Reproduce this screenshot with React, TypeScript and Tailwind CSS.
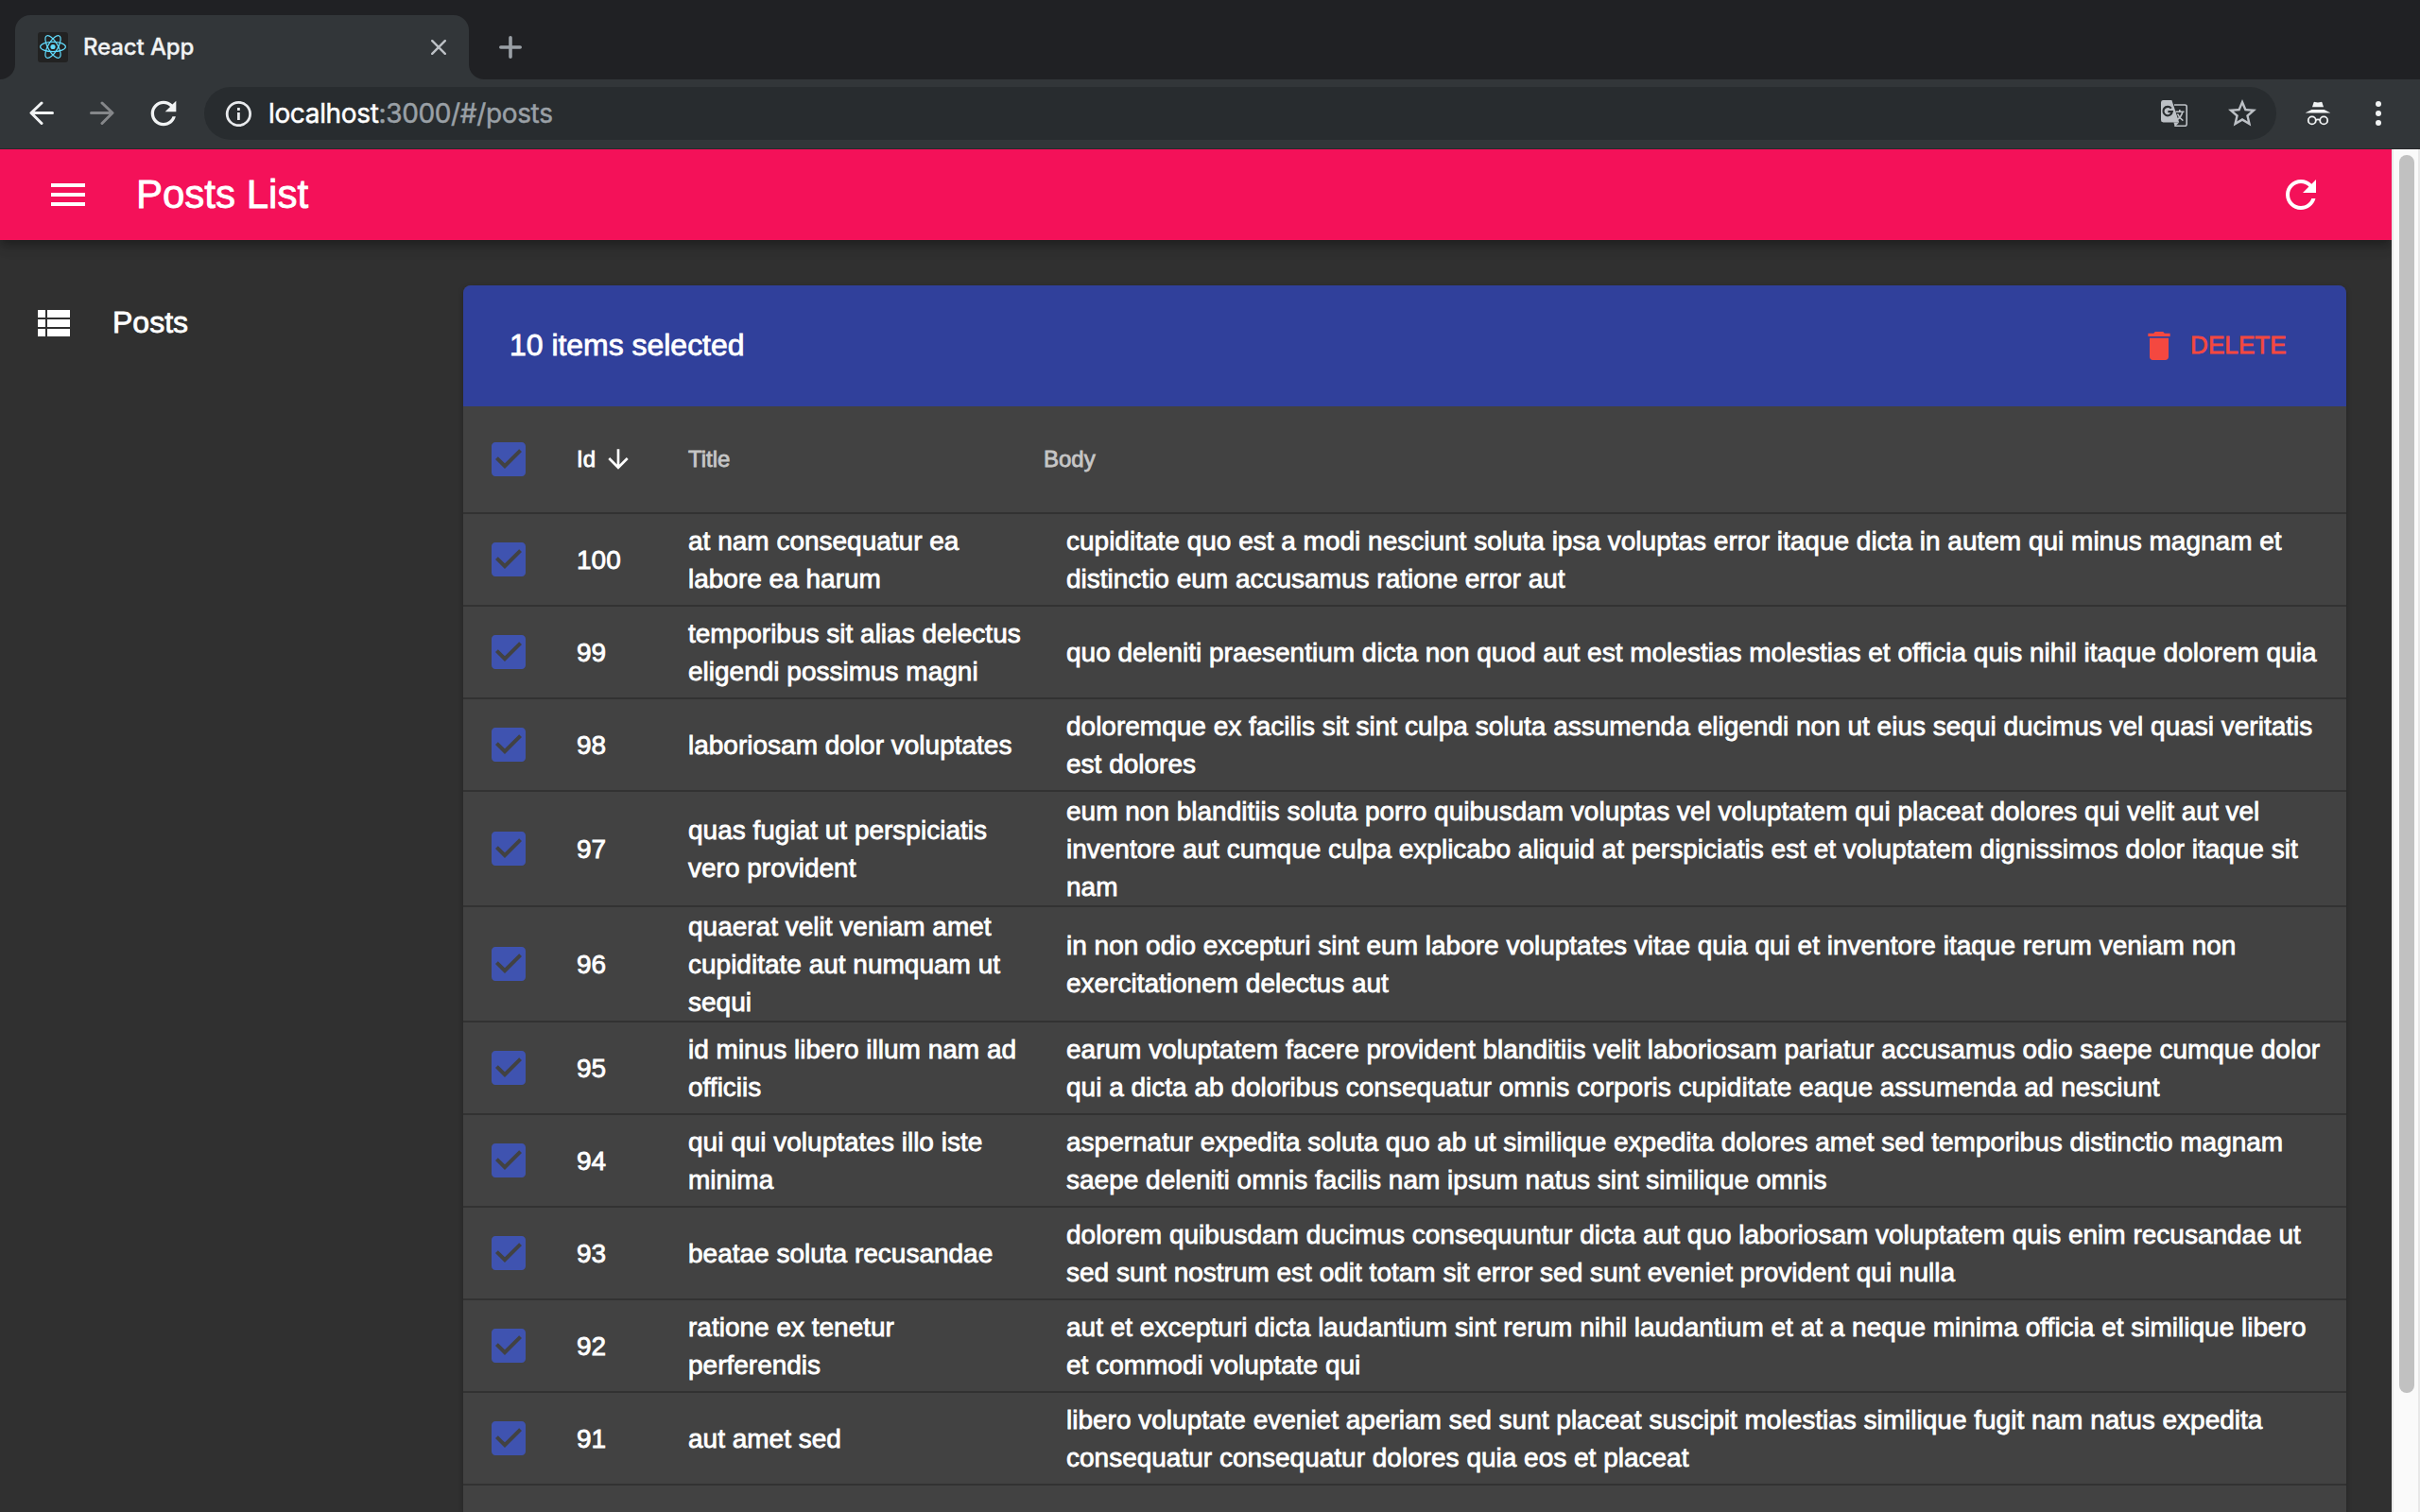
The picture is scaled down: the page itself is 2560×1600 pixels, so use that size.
import React from "react";

const rows: { id: number; title: string[]; body: string[] }[] = [
  { id: 100, title: ["at nam consequatur ea", "labore ea harum"], body: ["cupiditate quo est a modi nesciunt soluta ipsa voluptas error itaque dicta in autem qui minus magnam et", "distinctio eum accusamus ratione error aut"] },
  { id: 99, title: ["temporibus sit alias delectus", "eligendi possimus magni"], body: ["quo deleniti praesentium dicta non quod aut est molestias molestias et officia quis nihil itaque dolorem quia"] },
  { id: 98, title: ["laboriosam dolor voluptates"], body: ["doloremque ex facilis sit sint culpa soluta assumenda eligendi non ut eius sequi ducimus vel quasi veritatis", "est dolores"] },
  { id: 97, title: ["quas fugiat ut perspiciatis", "vero provident"], body: ["eum non blanditiis soluta porro quibusdam voluptas vel voluptatem qui placeat dolores qui velit aut vel", "inventore aut cumque culpa explicabo aliquid at perspiciatis est et voluptatem dignissimos dolor itaque sit", "nam"] },
  { id: 96, title: ["quaerat velit veniam amet", "cupiditate aut numquam ut", "sequi"], body: ["in non odio excepturi sint eum labore voluptates vitae quia qui et inventore itaque rerum veniam non", "exercitationem delectus aut"] },
  { id: 95, title: ["id minus libero illum nam ad", "officiis"], body: ["earum voluptatem facere provident blanditiis velit laboriosam pariatur accusamus odio saepe cumque dolor", "qui a dicta ab doloribus consequatur omnis corporis cupiditate eaque assumenda ad nesciunt"] },
  { id: 94, title: ["qui qui voluptates illo iste", "minima"], body: ["aspernatur expedita soluta quo ab ut similique expedita dolores amet sed temporibus distinctio magnam", "saepe deleniti omnis facilis nam ipsum natus sint similique omnis"] },
  { id: 93, title: ["beatae soluta recusandae"], body: ["dolorem quibusdam ducimus consequuntur dicta aut quo laboriosam voluptatem quis enim recusandae ut", "sed sunt nostrum est odit totam sit error sed sunt eveniet provident qui nulla"] },
  { id: 92, title: ["ratione ex tenetur", "perferendis"], body: ["aut et excepturi dicta laudantium sint rerum nihil laudantium et at a neque minima officia et similique libero", "et commodi voluptate qui"] },
  { id: 91, title: ["aut amet sed"], body: ["libero voluptate eveniet aperiam sed sunt placeat suscipit molestias similique fugit nam natus expedita", "consequatur consequatur dolores quia eos et placeat"] },
];

function Icon({ d, className }: { d: string; className: string }) {
  return (
    <svg viewBox="0 0 24 24" fill="currentColor" className={`shrink-0 ${className}`}>
      <path d={d} />
    </svg>
  );
}

const REFRESH = "M17.65 6.35C16.2 4.9 14.21 4 12 4c-4.42 0-7.99 3.58-7.99 8s3.57 8 7.99 8c3.73 0 6.84-2.55 7.73-6h-2.08c-.82 2.33-3.04 4-5.65 4-3.31 0-6-2.69-6-6s2.69-6 6-6c1.66 0 3.14.69 4.22 1.78L13 11h7V4l-2.35 2.35z";
const CHECKED = "M19 3H5c-1.11 0-2 .9-2 2v14c0 1.1.89 2 2 2h14c1.11 0 2-.9 2-2V5c0-1.1-.89-2-2-2zm-9 14l-5-5 1.41-1.41L10 14.17l7.59-7.59L19 8l-9 9z";

function Favicon() {
  return (
    <svg viewBox="0 0 32 32" className="size-8 shrink-0" fill="none" stroke="#61dafb" strokeWidth="1.2">
      <rect width="32" height="32" rx="3" fill="#222" stroke="none" />
      <circle cx="16" cy="15.5" r="2.6" fill="#61dafb" stroke="none" />
      <ellipse cx="16" cy="15.5" rx="13.4" ry="5.2" />
      <ellipse cx="16" cy="15.5" rx="13.4" ry="5.2" transform="rotate(60 16 15.5)" />
      <ellipse cx="16" cy="15.5" rx="13.4" ry="5.2" transform="rotate(120 16 15.5)" />
    </svg>
  );
}

function TabStrip() {
  return (
    <div className="flex h-[84px] items-end bg-[#202124]">
      <svg viewBox="0 0 16 16" className="size-4 shrink-0 text-[#323639]" fill="currentColor"><path d="M16 0V16H0A16 16 0 0 0 16 0Z" /></svg>
      <div className="flex h-[68px] w-[480px] items-center rounded-t-2xl bg-[#323639] pl-6 pr-6">
        <Favicon />
        <span className="ml-4 flex-1 whitespace-nowrap font-[Inter] text-[24px] leading-8 font-medium tracking-[-0.12px] text-[#f1f3f4] [-webkit-text-stroke:0.3px]">React App</span>
        <svg viewBox="0 0 16 16" className="size-4" stroke="#bdc1c6" strokeWidth="2.4" strokeLinecap="round"><path d="M1.2 1.2L14.8 14.8M14.8 1.2L1.2 14.8" /></svg>
      </div>
      <svg viewBox="0 0 16 16" className="size-4 shrink-0 text-[#323639]" fill="currentColor"><path d="M0 0V16H16A16 16 0 0 1 0 0Z" /></svg>
      <div className="flex h-[68px] items-center pl-4">
        <svg viewBox="0 0 24 24" className="size-6" stroke="#9aa0a6" strokeWidth="3.6" strokeLinecap="round"><path d="M12 1.8V22.2M1.8 12H22.2" /></svg>
      </div>
    </div>
  );
}

function Toolbar() {
  return (
    <div className="flex h-[74px] items-center bg-[#323639] shadow-[inset_0_-1px_0_#28292c] pb-[2px]">
      <svg viewBox="0 0 26 26" className="ml-[31px] size-[26px]" fill="none" stroke="#f1f3f4" strokeWidth="3" strokeLinecap="round" strokeLinejoin="round"><path d="M13 2L2 12.5L13 23.5M2.4 12.5H24.5" /></svg>
      <svg viewBox="0 0 26 26" className="ml-[38px] size-[26px]" fill="none" stroke="#85878a" strokeWidth="3" strokeLinecap="round" strokeLinejoin="round"><path d="M13 2L24 12.5L13 23.5M23.6 12.5H1.5" /></svg>
      <Icon d={REFRESH} className="ml-[32px] size-[40px] text-[#f1f3f4]" />
      <div className="ml-[23px] flex h-14 w-[2192px] items-center rounded-full bg-[#282c2f]">
        <svg viewBox="0 0 28 28" className="ml-[22px] size-7" fill="none" stroke="#e8eaed" strokeWidth="2.8"><circle cx="14.4" cy="14.5" r="12.2" /><path d="M14.4 12.9V21M14.4 7.9V10.9" /></svg>
        <span className="ml-[18px] flex-1 whitespace-nowrap font-[Inter] text-[28px] leading-8 tracking-[-0.35px] text-[#9aa0a6] [-webkit-text-stroke:0.5px]"><span className="text-[#fff]">localhost</span>:3000/#/posts</span>
        <svg viewBox="0 0 28 28" className="size-7" fill="none">
          <path d="M14 5H25.2A2 2 0 0 1 27.2 7V25.2A2 2 0 0 1 25.2 27.2H14.4" stroke="#bdc1c6" strokeWidth="1.6" />
          <path d="M2.4 0H11.4L19.2 23.5H2.4A2.4 2.4 0 0 1 0 21.1V2.4A2.4 2.4 0 0 1 2.4 0Z" fill="#bdc1c6" />
          <path d="M13.4 23.5H19.2L14.8 28Z" fill="#bdc1c6" />
          <path d="M10.8 8.6A4.7 4.7 0 1 0 11.8 12.2H7.4" stroke="#282c2f" strokeWidth="2.2" />
          <path d="M15.5 12.2H24.5M19.8 10V12M22.8 12.5C22 16 19.5 19 17.2 20.6M17.5 14.5C18.6 17.3 20.5 19.8 23.4 21.6" stroke="#bdc1c6" strokeWidth="1.6" />
        </svg>
        <Icon d="M22 9.24l-7.19-.62L12 2 9.19 8.63 2 9.24l5.46 4.73L5.82 21 12 17.27 18.18 21l-1.63-7.03L22 9.24zM12 15.4l-3.76 2.27 1-4.28-3.32-2.88 4.38-.38L12 6.1l1.71 4.04 4.38.38-3.32 2.88 1 4.28L12 15.4z" className="ml-10 mr-[18px] size-9 text-[#bdc1c6]" />
      </div>
      <svg viewBox="0 0 26 26" className="ml-[31px] size-[26px]" fill="#f1f3f4">
        <path d="M8.6 1.2Q9 0.6 9.8 0.9L13 1.6L16.2 0.9Q17 0.6 17.4 1.2L19 6.2H7Z" />
        <path d="M6.4 9H19.6L26.4 12.4H-0.4Z" />
        <g fill="none" stroke="#f1f3f4" strokeWidth="1.8"><circle cx="6.8" cy="20.4" r="4" /><circle cx="19.2" cy="20.4" r="4" /><path d="M10.8 20Q13 18.8 15.2 20" /></g>
      </svg>
      <svg viewBox="0 0 6 26" className="ml-12 h-[26px] w-[6px]" fill="#f1f3f4"><circle cx="3" cy="3" r="3" /><circle cx="3" cy="13" r="3" /><circle cx="3" cy="23" r="3" /></svg>
    </div>
  );
}

function PostsTable() {
  return (
    <div className="min-w-0 flex-1 rounded-t-lg bg-[#424242] shadow-[0_2px_6px_rgba(0,0,0,0.2),0_2px_2px_rgba(0,0,0,0.14)]">
      <div className="flex h-32 items-center rounded-t-lg bg-[#30409b] pl-[49px] pr-[62px] text-[#fff]">
        <span className="flex-1 pb-[2px] text-[32px] leading-none tracking-[-0.03px]">10 items selected</span>
        <Icon d="M6 19c0 1.1.9 2 2 2h8c1.1 0 2-.9 2-2V7H6v12zM19 4h-3.5l-1-1h-5l-1 1H5v2h14V4z" className="size-10 text-[#f44840]" />
        <span className="ml-[13px] w-[103px] whitespace-nowrap pb-[2px] text-[26px] leading-none tracking-[0.1px] text-[#f44840]">DELETE</span>
      </div>
      <div className="flex h-[114px] items-center border-b-2 border-[#323232] pl-6 text-[24px] text-[#c6c6c6]">
        <Icon d={CHECKED} className="size-12 text-[#3f53b0]" />
        <span className="ml-12 flex w-[118px] items-center text-white">Id<Icon d="M20 12l-1.41-1.41L13 16.17V4h-2v12.17l-5.58-5.59L4 12l8 8 8-8z" className="ml-2 size-8" /></span>
        <span className="w-[376px]">Title</span>
        <span>Body</span>
      </div>
      {rows.map((r) => (
        <div key={r.id} className="flex min-h-[98px] items-center border-b-2 border-[#323232] pl-6 text-[28px] leading-[40px] whitespace-nowrap text-white">
          <Icon d={CHECKED} className="size-12 text-[#3f53b0]" />
          <span className="ml-12 w-[118px] translate-y-px">{r.id}</span>
          <div className="w-[400px] translate-y-px">{r.title.map((l) => <div key={l}>{l}</div>)}</div>
          <div className="translate-y-px">{r.body.map((l) => <div key={l}>{l}</div>)}</div>
        </div>
      ))}
    </div>
  );
}

export default function App() {
  return (
    <div className="flex h-[1600px] w-[2560px] flex-col overflow-hidden bg-[#303030] font-['Liberation_Sans',Arial,sans-serif]">
      <TabStrip />
      <Toolbar />
      <div className="flex min-h-0 flex-1">
        <div className="flex w-[2530px] flex-col overflow-hidden text-white [-webkit-text-stroke:0.8px]">
          <header className="z-10 flex h-24 shrink-0 items-center bg-[#f41159] pl-12 pr-[72px] shadow-[0_4px_8px_-2px_rgba(0,0,0,0.2),0_8px_10px_rgba(0,0,0,0.14),0_2px_20px_rgba(0,0,0,0.12)]">
            <Icon d="M3 18h18v-2H3v2zm0-5h18v-2H3v2zm0-7v2h18V6H3z" className="size-12" />
            <h1 className="ml-12 flex-1 text-[42px] leading-none">Posts List</h1>
            <Icon d={REFRESH} className="size-12" />
          </header>
          <div className="flex min-h-0 flex-1 pr-12 pt-12">
            <nav className="flex w-[490px] shrink-0 items-start pl-8 pt-4">
              <Icon d="M4 14h4v-4H4v4zm0 5h4v-4H4v4zM4 9h4V5H4v4zm5 5h12v-4H9v4zm0 5h12v-4H9v4zM9 5v4h12V5H9z" className="size-12" />
              <span className="ml-[39px] text-[32px] leading-[46px]">Posts</span>
            </nav>
            <PostsTable />
          </div>
        </div>
        <div className="w-[30px] border-x-2 border-[#e8e8e8] bg-[#fafafa] px-[6px] pt-[6px]">
          <div className="h-[1310px] w-4 rounded-full bg-[#c1c1c1]" />
        </div>
      </div>
    </div>
  );
}
